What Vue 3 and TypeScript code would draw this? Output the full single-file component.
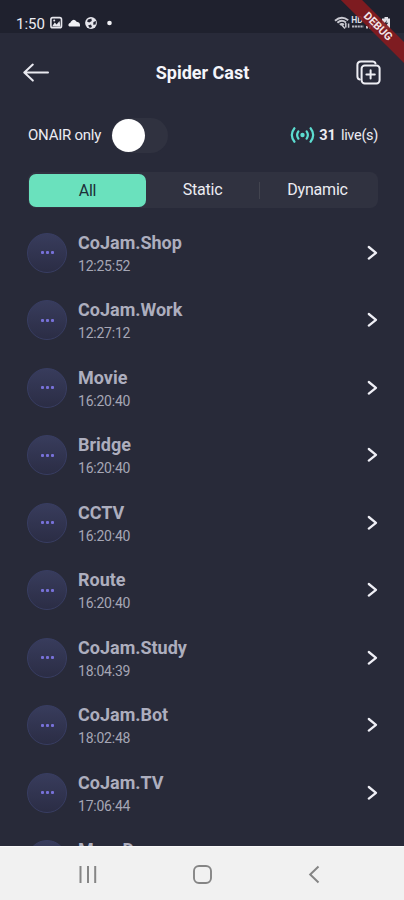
<script setup lang="ts">
interface Channel {
  name: string
  time: string
}

const channels: Channel[] = [
  { name: 'CoJam.Shop', time: '12:25:52' },
  { name: 'CoJam.Work', time: '12:27:12' },
  { name: 'Movie', time: '16:20:40' },
  { name: 'Bridge', time: '16:20:40' },
  { name: 'CCTV', time: '16:20:40' },
  { name: 'Route', time: '16:20:40' },
  { name: 'CoJam.Study', time: '18:04:39' },
  { name: 'CoJam.Bot', time: '18:02:48' },
  { name: 'CoJam.TV', time: '17:06:44' },
  { name: 'MoveD', time: '' },
]
</script>

<template>
  <div class="phone">
    <div class="status">
      <span class="clock">1:50</span>
      <svg class="status-left" width="66" height="14" viewBox="0 0 66 14">
        <rect x="0.9" y="1.6" width="10.6" height="10.2" rx="1.8" fill="none" stroke="#e6e6ec" stroke-width="1.6" />
        <path d="M2 10.5 L4.8 6.5 L6.6 8.4 L9.5 5 L10.5 10.8 Z" fill="#e6e6ec" />
        <circle cx="4.2" cy="4.6" r="1" fill="#e6e6ec" />
        <path d="M19.5 10.6 A2.2 2.2 0 0 1 19 7.4 Q20.6 6.8 21 5.4 Q24 1.8 26.6 5.8 Q30.5 6 30 10.6 Z" fill="#f0f0f4" />
        <circle cx="41" cy="7" r="5.9" fill="#e6e6ec" />
        <path d="M38 3.4 L41.4 2.6 L41.8 5 L39.2 6.6 L37 5.4 Z M43.4 6 L46 5 L45.6 8.6 L43.2 8.8 Z M38 9.4 L41 8.6 L42 11 L39.8 12 Z" fill="#242533" />
        <circle cx="59.5" cy="7" r="2.3" fill="#f0f0f4" />
      </svg>
      <svg class="status-right" width="58" height="16" viewBox="0 0 58 16">
        <path d="M1 5.8 Q7.5 -0.2 14.2 5.2 M3.4 7.8 Q7.5 4 12 7.4 M5.8 9.8 Q8 8 10 9.8" fill="none" stroke="#c9c9d1" stroke-width="1.9" />
        <path d="M7 9 L11 13.6 M11.8 8 V12.6 M14.6 8.5 V12.8" stroke="#c9c9d1" stroke-width="1.5" />
        <text x="17.3" y="8.4" class="hd">HD</text>
        <path d="M18 11.5 H29.5" stroke="#b5b5bf" stroke-width="2" stroke-dasharray="2.2 .6" />
        <path d="M33 13.5 V11 M36 13.5 V9 M39 13.5 V7 M42 13.5 V4" stroke="#d6d6dc" stroke-width="1.8" />
        <path d="M49 3.5 H50.5 V2 H54 V3.5 H56 V13.5 H48 V3.5 Z" fill="#e0e0e6" />
        <path d="M53 5 L50 9 H52 L51 12 L54.3 7.8 H52.2 Z" fill="#242533" />
      </svg>
    </div>

    <header class="header">
      <svg width="26" height="20" viewBox="0 0 26 20" fill="none" stroke="#e9e9f0" stroke-width="2" stroke-linecap="round" stroke-linejoin="round">
        <path d="M9.8 1.6 L1.3 9.6 L9.8 17.6 M1.6 9.6 H25" />
      </svg>
      <h1 class="title">Spider Cast</h1>
      <svg width="25" height="25" viewBox="0 0 25 25" fill="none" stroke="#eeeef4" stroke-width="2" stroke-linecap="round" stroke-linejoin="round">
        <path d="M3.8 19.5 Q1.4 19 1.4 16.2 V5 Q1.4 1.4 5 1.4 H16.4 Q19 1.4 19.5 3.4" />
        <rect x="5.6" y="5.4" width="18" height="18" rx="3.2" />
        <path d="M14.6 10.2 V18.6 M10.4 14.4 H18.8" />
      </svg>
    </header>

    <div class="filter">
      <span class="filter-label">ONAIR only</span>
      <span class="toggle"><span class="knob"></span></span>
      <span class="live">
        <svg width="25" height="18" viewBox="0 0 26 18" fill="none" stroke="#5cdcd0" stroke-width="2.3" stroke-linecap="round">
          <circle cx="13" cy="9" r="2.3" fill="#5cdcd0" stroke="none" />
          <path d="M8.7 5.2 Q6.1 9 8.7 12.8 M17.3 5.2 Q19.9 9 17.3 12.8 M4.6 2 Q-0.8 9 4.6 16 M21.4 2 Q26.8 9 21.4 16" />
        </svg>
        <b class="count">31</b>
        <span class="unit">live(s)</span>
      </span>
    </div>

    <div class="tabs">
      <span class="tab active">All</span>
      <span class="tab">Static</span>
      <span class="divider"></span>
      <span class="tab last">Dynamic</span>
    </div>

    <main class="list">
      <div v-for="channel in channels" :key="channel.name" class="row">
        <span class="avatar"><i></i><i></i><i></i></span>
        <div class="info">
          <span class="name">{{ channel.name }}</span>
          <span class="time">{{ channel.time }}</span>
        </div>
        <svg width="12" height="16" viewBox="0 0 12 16" fill="none" stroke="#efeff6" stroke-width="2.3" stroke-linecap="round" stroke-linejoin="round">
          <path d="M2.8 2 L10 7.8 L2.8 13.6" />
        </svg>
      </div>
    </main>

    <nav class="nav">
      <svg width="18" height="20" viewBox="0 0 18 20" stroke="#858585" stroke-width="2">
        <path d="M1.5 1 V18 M9 1 V18 M16.2 1 V18" />
      </svg>
      <svg width="20" height="20" viewBox="0 0 20 20" fill="none" stroke="#858585" stroke-width="1.9">
        <rect x="1" y="1" width="17" height="17" rx="5" />
      </svg>
      <svg width="12" height="20" viewBox="0 0 12 20" fill="none" stroke="#858585" stroke-width="2">
        <path d="M10.5 1.5 L2.2 9.5 L10.5 17.5" />
      </svg>
    </nav>

    <div class="corner"><div class="ribbon">DEBUG</div></div>
  </div>
</template>

<style>
body {
  background: #282a39;
}
</style>

<style scoped>
.phone {
  position: relative;
  display: flex;
  flex-direction: column;
  width: 404px;
  height: 900px;
  overflow: hidden;
  background: #282a39;
  color: #ececf2;
  font-family: Roboto, sans-serif;
}
.phone svg {
  display: block;
  flex: none;
}
.status {
  display: flex;
  align-items: center;
  height: 33px;
  flex: none;
  box-sizing: border-box;
  padding: 13px 12px 0 16px;
  background: #1f212e;
}
.clock {
  width: 34px;
  padding-top: 1px;
  font-size: 15px;
  line-height: 20px;
  white-space: nowrap;
}
.status-right {
  margin-left: auto;
}
.hd {
  fill: #dcdce2;
  font-size: 8.5px;
  font-weight: 700;
}
.header {
  display: flex;
  align-items: center;
  justify-content: space-between;
  height: 79px;
  flex: none;
  box-sizing: border-box;
  padding: 0 23px;
}
.title {
  margin: 0;
  font-size: 18px;
  line-height: 24px;
  font-weight: 700;
  color: #f5f5fa;
}
.filter {
  display: flex;
  align-items: center;
  height: 46px;
  flex: none;
  padding: 0 26px 0 28px;
}
.filter-label {
  width: 83px;
  font-size: 15px;
  letter-spacing: -0.25px;
  white-space: nowrap;
}
.toggle {
  width: 57px;
  height: 35px;
  box-sizing: border-box;
  padding: 1px;
  border-radius: 18px;
  background: #303240;
}
.knob {
  display: block;
  width: 33px;
  height: 33px;
  border-radius: 50%;
  background: #fff;
}
.live {
  display: flex;
  align-items: center;
  margin-left: auto;
  font-size: 14.5px;
}
.count {
  margin-left: 4px;
}
.unit {
  margin-left: 5px;
  font-size: 14.5px;
  letter-spacing: -0.3px;
}
.tabs {
  display: flex;
  align-items: center;
  height: 36px;
  flex: none;
  box-sizing: border-box;
  margin: 14px 26px 0 28px;
  padding: 1px;
  border-radius: 8px;
  background: #303240;
}
.tab {
  flex: 0 0 113px;
  text-align: center;
  font-size: 16px;
  letter-spacing: -0.2px;
  line-height: 34px;
}
.last {
  flex: 1;
  padding-right: 2px;
}
.active {
  flex: 0 0 117px;
  height: 33px;
  border-radius: 7px;
  background: #6ae1bd;
  color: #1d3038;
}
.divider {
  width: 1px;
  height: 17px;
  background: #42444f;
}
.list {
  flex: 1;
  min-height: 0;
  overflow: hidden;
  padding: 11px 26px 0 27px;
}
.row {
  display: flex;
  align-items: center;
  height: 67.5px;
}
.avatar {
  display: flex;
  align-items: center;
  justify-content: center;
  gap: 2px;
  width: 40px;
  height: 40px;
  box-sizing: border-box;
  border: 1px solid #383d62;
  border-radius: 50%;
  background: linear-gradient(#383c5c, #2b2d45);
}
.avatar i {
  width: 3px;
  height: 3px;
  border-radius: 1px;
  background: #7771d8;
}
.info {
  display: flex;
  flex: 1;
  flex-direction: column;
  padding-top: 2px;
  margin-left: 11px;
}
.name {
  font-size: 18px;
  line-height: 24px;
  font-weight: 700;
  color: #adaebe;
}
.time {
  min-height: 22px;
  font-size: 14px;
  letter-spacing: -0.22px;
  line-height: 22px;
  color: #a5a6b5;
}
.nav {
  display: flex;
  align-items: center;
  justify-content: space-between;
  height: 54px;
  flex: none;
  box-sizing: border-box;
  padding: 2px 84px 0 79px;
  border-top: 1px solid #fafafa;
  background: #f1f1f1;
}
.corner {
  position: absolute;
  top: 0;
  right: 0;
  width: 80px;
  height: 80px;
  overflow: hidden;
}
.ribbon {
  position: absolute;
  top: 18.5px;
  left: -6px;
  width: 120px;
  height: 15px;
  transform: rotate(45deg);
  background: rgba(134, 27, 32, 0.92);
  color: #f3e4e8;
  font-size: 11px;
  line-height: 15px;
  font-weight: 700;
  text-align: center;
}
</style>
